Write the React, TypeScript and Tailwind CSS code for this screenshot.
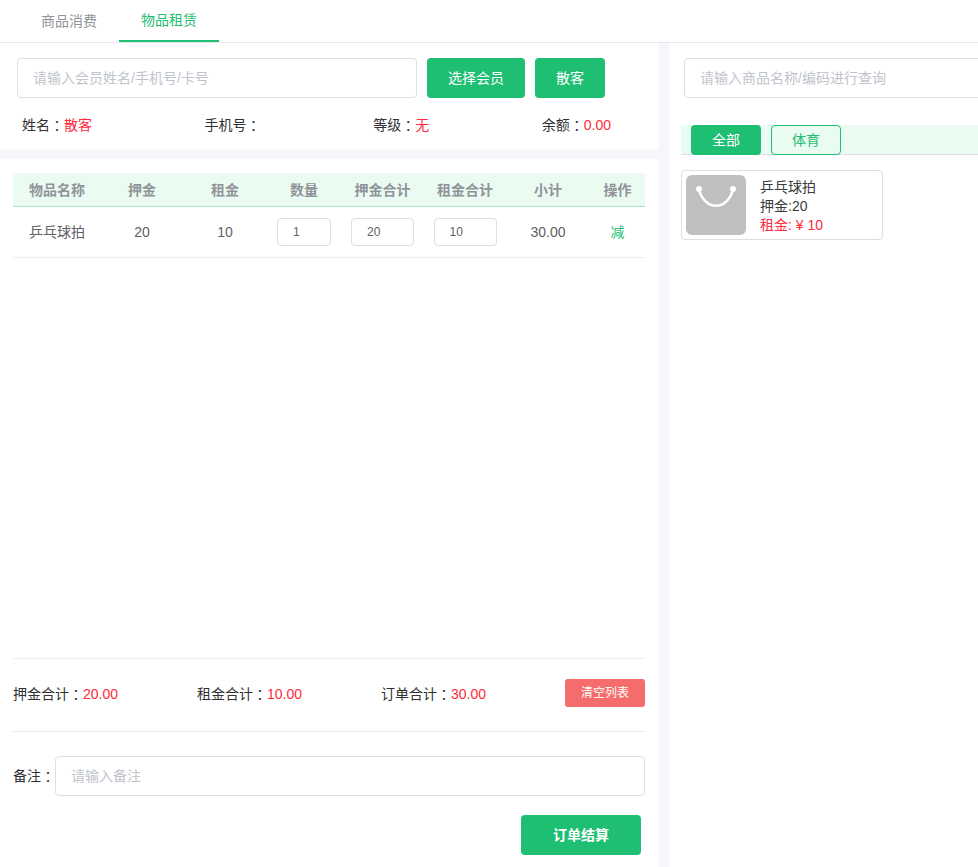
function Colon() {
  return <span className='inline-block translate-y-px font-["Noto_Sans_CJK_TC",sans-serif] leading-none'>：</span>;
}

export default function App() {
  const font = 'font-["Liberation_Sans","Noto_Sans_CJK_SC",sans-serif]';
  const cols = "grid grid-cols-[88px_82px_84px_74px_83px_82px_84px_55px] items-center text-center";
  const inputBase =
    "h-10 rounded border border-[#dcdfe6] bg-white px-[15px] text-sm text-[#606266] outline-none placeholder:text-[#c0c4cc]";
  const cellInput =
    "h-7 rounded border border-[#dcdfe6] bg-white px-[15px] text-xs text-[#606266] outline-none";
  return (
    <div className={`${font} h-[867px] w-[978px] overflow-hidden bg-white text-sm text-[#303133]`}>
      <div className="flex h-[43px] border-b border-[#e4e7ed] pl-[19px]">
        <div className="flex h-[42px] w-[100px] items-center justify-center text-[#909399]">商品消费</div>
        <div className="flex h-[42px] w-[100px] items-center justify-center border-b-2 border-[#1ebe73] text-[#1ebe73]">
          物品租赁
        </div>
      </div>

      <div className="flex h-[824px] bg-[#f5f7fa]">
        <div className="flex w-[659px] flex-col">
          <div className="h-[106px] bg-white pl-[17px] pr-[48px] pt-[15px]">
            <div className="flex">
              <input className={`${inputBase} w-[400px]`} placeholder="请输入会员姓名/手机号/卡号" />
              <button className="ml-2.5 h-10 w-[98px] rounded bg-[#1ebe73] text-sm text-white">选择会员</button>
              <button className="ml-2.5 h-10 w-[70px] rounded bg-[#1ebe73] text-sm text-white">散客</button>
            </div>
            <div className="mt-[17px] flex justify-between pl-[5px]">
              <span>姓名<Colon /><span className="text-[#ff2a3c]">散客</span></span>
              <span>手机号<Colon /></span>
              <span>等级<Colon /><span className="text-[#ff2a3c]">无</span></span>
              <span>余额<Colon /><span className="text-[#ff2a3c]">0.00</span></span>
            </div>
          </div>

          <div className="mt-2.5 flex flex-1 flex-col bg-white pl-[13px] pr-[14px] pt-3.5">
            <div className={`${cols} h-[34px] border-b border-[#a8e6c6] bg-[#eafbf1] font-bold text-[#909399]`}>
              <span>物品名称</span>
              <span>押金</span>
              <span>租金</span>
              <span>数量</span>
              <span>押金合计</span>
              <span>租金合计</span>
              <span>小计</span>
              <span>操作</span>
            </div>
            <div className={`${cols} h-[51px] border-b border-[#ebeef5] text-[#606266]`}>
              <span>乒乓球拍</span>
              <span>20</span>
              <span>10</span>
              <div className="flex justify-center">
                <input className={`${cellInput} w-[54px]`} defaultValue="1" />
              </div>
              <div className="flex justify-center">
                <input className={`${cellInput} w-[63px]`} defaultValue="20" />
              </div>
              <div className="flex justify-center">
                <input className={`${cellInput} w-[63px]`} defaultValue="10" />
              </div>
              <span>30.00</span>
              <span className="text-[#1ebe73]">减</span>
            </div>
            <div className="flex-1" />
            <div className="flex h-[74px] items-center justify-between border-y border-[#e4e7ed] border-t-[#ebeef5] pb-0.5">
              <span>押金合计<Colon /><span className="text-[#ff2a3c]">20.00</span></span>
              <span>租金合计<Colon /><span className="text-[#ff2a3c]">10.00</span></span>
              <span>订单合计<Colon /><span className="text-[#ff2a3c]">30.00</span></span>
              <button className="mb-0.5 h-7 w-20 rounded-[3px] bg-[#f56c6c] text-xs text-white">清空列表</button>
            </div>
            <div className="mt-6 flex items-center">
              <span className="w-[42px] shrink-0">备注<Colon /></span>
              <input className={`${inputBase} flex-1`} placeholder="请输入备注" />
            </div>
            <div className="mb-3 mt-[19px] flex justify-end pr-1">
              <button className="h-10 w-[120px] rounded bg-[#1ebe73] text-sm font-bold text-white">订单结算</button>
            </div>
          </div>
        </div>

        <div className="ml-2.5 min-w-0 flex-1 bg-white pl-3 pt-[15px]">
          <div className="pl-[3px]">
            <input className={`${inputBase} w-[400px]`} placeholder="请输入商品名称/编码进行查询" />
          </div>
          <div className="mt-[27px] flex h-[30px] gap-2.5 border-b border-[#dcdfe6] bg-[#eafbf1] pl-2.5">
            <button className="h-[30px] w-[70px] rounded bg-[#1ebe73] text-sm text-white">全部</button>
            <button className="h-[30px] w-[70px] rounded border border-[#1ebe73] bg-transparent text-sm text-[#1ebe73]">体育</button>
          </div>
          <div className="mt-[15px] flex h-[70px] w-[202px] rounded border border-[#dcdfe6] p-1">
            <div className="flex h-[60px] w-[60px] shrink-0 justify-center rounded-md bg-[#bfbfbf] pt-[11px]">
              <svg width="40" height="24" viewBox="0 0 40 24" fill="none">
                <path d="M3 3 C5 13 12 19.7 20 19.7 C28 19.7 35 13 37 3" stroke="#fff" strokeWidth="2.6" strokeLinecap="round" />
                <circle cx="3" cy="3" r="3" fill="#fff" />
                <circle cx="37" cy="3" r="3" fill="#fff" />
              </svg>
            </div>
            <div className="ml-3.5 pt-[3px] leading-[19px] text-[#3a3b3d]">
              <div>乒乓球拍</div>
              <div>押金:20</div>
              <div className="text-[#ff2a3c]">租金: ¥ 10</div>
            </div>
          </div>
        </div>
      </div>
    </div>
  );
}
